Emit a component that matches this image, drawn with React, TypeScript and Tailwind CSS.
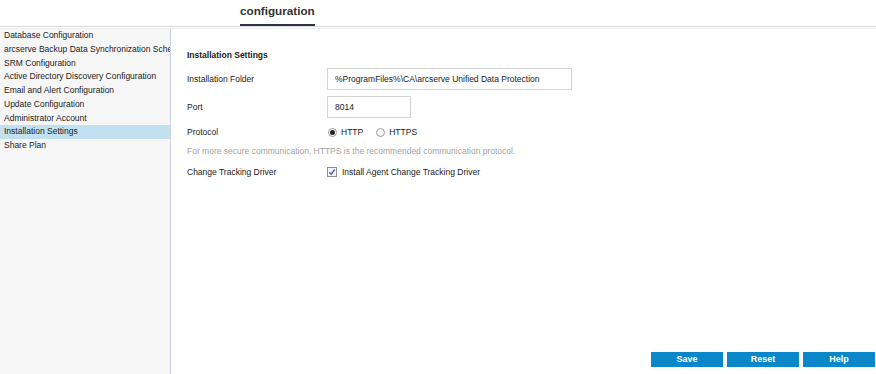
import React, { useState } from 'react';

const menuItems = [
    'Database Configuration',
    'arcserve Backup Data Synchronization Schedule',
    'SRM Configuration',
    'Active Directory Discovery Configuration',
    'Email and Alert Configuration',
    'Update Configuration',
    'Administrator Account',
    'Installation Settings',
    'Share Plan',
];

const Radio: React.FC<{ checked: boolean; onClick: () => void; label: string }> = ({ checked, onClick, label }) => (
    <label className="flex items-center gap-[4px] cursor-pointer" onClick={onClick}>
        <span className="w-[9px] h-[9px] rounded-full border border-[#9a9a9a] bg-white flex items-center justify-center">
            {checked && <span className="w-[5px] h-[5px] rounded-full bg-[#222]" />}
        </span>
        <span className="text-[#222]">{label}</span>
    </label>
);

export default function App() {
    const [selected, setSelected] = useState('Installation Settings');
    const [protocol, setProtocol] = useState<'HTTP' | 'HTTPS'>('HTTP');
    const [folder, setFolder] = useState('%ProgramFiles%\\CA\\arcserve Unified Data Protection');
    const [port, setPort] = useState('8014');
    const [installDriver, setInstallDriver] = useState(true);

    return (
        <div
            className="w-[876px] h-[374px] bg-white flex flex-col overflow-hidden text-[8.5px] text-[#222]"
            style={{ fontFamily: '"Liberation Sans", Arial, sans-serif' }}
        >
            {/* Header */}
            <div className="h-[26px] pl-[240px] shrink-0">
                <div className="inline-block h-[26px] pt-[2px] leading-[18px] text-[11.7px] font-bold text-[#333] border-b-2 border-[#2e3248]">
                    configuration
                </div>
            </div>
            <div className="h-[1px] bg-[#d7dadd] shrink-0" />
            <div className="h-[1px] bg-white shrink-0" />
            <div className="h-[1px] bg-[#eceef0] shrink-0" />

            <div className="flex flex-1 min-h-0">
                {/* Sidebar */}
                <div className="w-[171px] shrink-0 bg-[#f6f6f6] border-r border-[#cfd2e3] overflow-hidden">
                    {menuItems.map((item) => (
                        <div
                            key={item}
                            onClick={() => setSelected(item)}
                            className={`h-[13.75px] leading-[13.75px] pl-[4px] whitespace-nowrap overflow-hidden cursor-pointer ${
                                selected === item ? 'bg-[#c3e0f1]' : ''
                            }`}
                        >
                            {item}
                        </div>
                    ))}
                </div>

                {/* Content */}
                <div className="flex-1 flex flex-col pl-[16px]">
                    <div className="mt-[20px] h-[12px] leading-[12px] font-bold text-[#222]">Installation Settings</div>

                    <div className="flex items-center mt-[7px] h-[22px]">
                        <div className="w-[140px]">Installation Folder</div>
                        <input
                            value={folder}
                            onChange={(e) => setFolder(e.target.value)}
                            className="w-[245px] h-[22px] border border-[#d4d4d4] px-[7px] text-[8.5px] text-[#222] outline-none"
                        />
                    </div>

                    <div className="flex items-center mt-[6px] h-[22px]">
                        <div className="w-[140px]">Port</div>
                        <input
                            value={port}
                            onChange={(e) => setPort(e.target.value)}
                            className="w-[84px] h-[22px] border border-[#d4d4d4] px-[7px] text-[8.5px] text-[#222] outline-none"
                        />
                    </div>

                    <div className="flex items-center mt-[7px] h-[14px]">
                        <div className="w-[141px]">Protocol</div>
                        <div className="flex items-center gap-[13px]">
                            <Radio checked={protocol === 'HTTP'} onClick={() => setProtocol('HTTP')} label="HTTP" />
                            <Radio checked={protocol === 'HTTPS'} onClick={() => setProtocol('HTTPS')} label="HTTPS" />
                        </div>
                    </div>

                    <div className="mt-[5px] h-[14px] leading-[14px] text-[#a3a3a3]">
                        For more secure communication, HTTPS is the recommended communication protocol.
                    </div>

                    <div className="flex items-center mt-[7px] h-[14px]">
                        <div className="w-[140px]">Change Tracking Driver</div>
                        <label className="flex items-center gap-[5px] cursor-pointer">
                            <span
                                onClick={() => setInstallDriver(!installDriver)}
                                className="w-[10px] h-[10px] border border-[#8f8f8f] bg-[#f4f6fb] flex items-center justify-center"
                            >
                                {installDriver && (
                                    <svg width="8" height="8" viewBox="0 0 8 8">
                                        <path d="M1.3 4.2 L3.2 6.2 L6.7 1.5" fill="none" stroke="#3a57c4" strokeWidth="1.3" />
                                    </svg>
                                )}
                            </span>
                            <span>Install Agent Change Tracking Driver</span>
                        </label>
                    </div>

                    <div className="flex-1" />

                    <div className="flex justify-end gap-[4px] pr-[1px] pb-[7px]">
                        {['Save', 'Reset', 'Help'].map((b) => (
                            <button
                                key={b}
                                className="w-[72px] h-[15px] bg-[#0a87c9] text-white font-bold text-[9px] leading-[15px]"
                            >
                                {b}
                            </button>
                        ))}
                    </div>
                </div>
            </div>
        </div>
    );
}
